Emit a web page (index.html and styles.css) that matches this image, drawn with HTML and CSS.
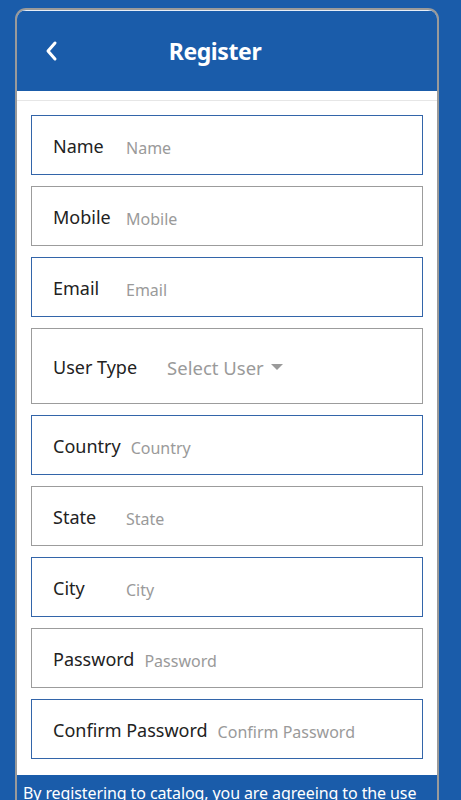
FILE: index.html
```html
<!DOCTYPE html>
<html lang="en">
<head>
    <meta charset="UTF-8" />
    <title>Register</title>
    <link rel="stylesheet" href="styles.css">
</head>
<body>

    <div class="card">
        <!-- Cabeçalho -->
        <div class="card-header">
            <span class="back">
                <svg width="14" height="22" viewBox="0 0 14 22">
                    <path d="M11 3 L4 11 L11 19" fill="none" stroke="#fff" stroke-width="3" stroke-linecap="round" stroke-linejoin="round"/>
                </svg>
            </span>
            <h1>Register</h1>
        </div>

        <!-- Formulário -->
        <form class="form">
            <div class="field blue">
                <label>Name</label>
                <input type="text" placeholder="Name" />
            </div>
            <div class="field">
                <label>Mobile</label>
                <input type="text" placeholder="Mobile" />
            </div>
            <div class="field blue">
                <label>Email</label>
                <input type="text" placeholder="Email" />
            </div>
            <div class="field tall">
                <label class="wide">User Type</label>
                <span class="select">Select User <span class="caret"></span></span>
            </div>
            <div class="field blue">
                <label>Country</label>
                <input type="text" placeholder="Country" />
            </div>
            <div class="field">
                <label>State</label>
                <input type="text" placeholder="State" />
            </div>
            <div class="field blue">
                <label>City</label>
                <input type="text" placeholder="City" />
            </div>
            <div class="field">
                <label>Password</label>
                <input type="password" placeholder="Password" />
            </div>
            <div class="field blue">
                <label>Confirm Password</label>
                <input type="password" placeholder="Confirm Password" />
            </div>
        </form>

        <div class="terms">
            By registering to catalog, you are agreeing to the use of our terms and conditions.
        </div>
    </div>

</body>
</html>
```

FILE: styles.css
```css
* {
    box-sizing: border-box;
}

body {
    font-family: 'Noto Sans', 'Open Sans', sans-serif;
    background: #1a5caa;
    margin: 0;
    padding: 8px 22px 0 15px;
    color: #222;
}

.card {
    border: 2px solid #9a9a9a;
    border-bottom: none;
    border-radius: 11px 11px 0 0;
    background: #fff;
    overflow: hidden;
}

.card-header {
    position: relative;
    height: 81px;
    background: #1a5caa;
    border-top: 1px solid #e8eef6;
    display: flex;
    align-items: center;
    justify-content: center;
}

.card-header h1 {
    margin: 0 24px 0 0;
    color: #fff;
    font-size: 23px;
    font-weight: 700;
    letter-spacing: -0.4px;
}

.back {
    position: absolute;
    left: 27px;
    top: 29px;
}

.form {
    border-top: 9px solid #fff;
    box-shadow: inset 0 1px 0 #e6e6e6;
    padding: 15px 14px 16px 14px;
    display: flex;
    flex-direction: column;
    gap: 11px;
}

.field {
    height: 60px;
    border: 1px solid #9c9c9c;
    display: flex;
    align-items: center;
    padding: 2px 0 0 21px;
}

.field.blue {
    border-color: #3365a9;
}

.field.tall {
    height: 76px;
}

label {
    min-width: 63px;
    margin-right: 10px;
    font-size: 18px;
    color: #222;
}

label.wide {
    margin-right: 30px;
}

input {
    flex: 1;
    border: none;
    outline: none;
    padding: 3px 0 0 0;
    font-family: inherit;
    font-size: 16px;
    color: #222;
    min-width: 0;
}

input::placeholder {
    color: #9a9a9a;
}

.select {
    font-size: 18.5px;
    color: #9a9a9a;
    display: flex;
    align-items: center;
}

.caret {
    margin-left: 7px;
    width: 0;
    height: 0;
    border-left: 6px solid transparent;
    border-right: 6px solid transparent;
    border-top: 6px solid #9a9a9a;
}

.terms {
    background: #1a5caa;
    color: #fff;
    font-size: 16px;
    letter-spacing: -0.1px;
    padding: 7px 6px 10px 6px;
    line-height: 1.4;
}
```
